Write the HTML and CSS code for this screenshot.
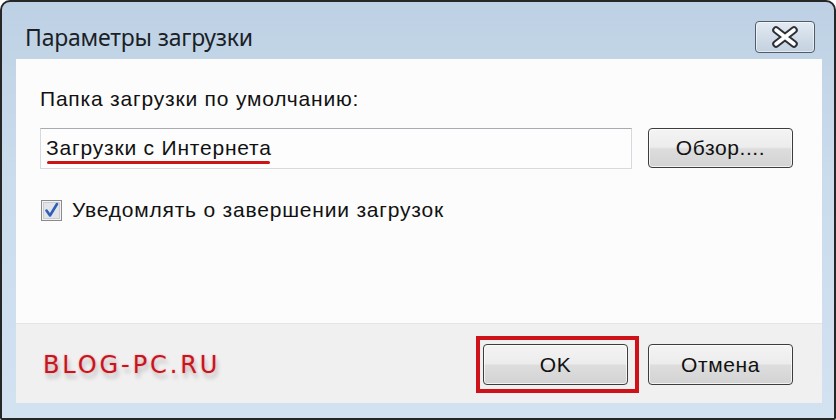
FILE: index.html
```html
<!DOCTYPE html>
<html lang="ru">
<head>
<meta charset="utf-8">
<title>Параметры загрузки</title>
<link rel="stylesheet" href="styles.css">
</head>
<body>
<div class="window">
  <div class="titlebar">
    <div class="title">Параметры загрузки</div>
    <button class="close" aria-label="Закрыть">
      <svg width="28" height="22" viewBox="0 0 28 22">
        <path d="M5 4 L23 18 M23 4 L5 18" stroke="#2b2f36" stroke-width="7.5" stroke-linecap="round" fill="none"/>
        <path d="M5 4 L23 18 M23 4 L5 18" stroke="#ffffff" stroke-width="3.6" stroke-linecap="round" fill="none"/>
      </svg>
    </button>
  </div>
  <div class="client">
    <div class="content">
      <div class="label">Папка загрузки по умолчанию:</div>
      <div class="folder-row">
        <div class="field"><span class="marked">Загрузки с Интернета</span></div>
        <button class="btn">Обзор....</button>
      </div>
      <label class="check-row">
        <span class="checkbox">
          <svg width="21" height="21" viewBox="0 0 21 21">
            <rect x="0.5" y="0.5" width="20" height="20" fill="#f4f4f4" stroke="#8a8a8a"/>
            <rect x="2.5" y="2.5" width="16" height="16" fill="#e2e4e8" stroke="#c9ccd2"/>
            <path d="M5.5 10.5 L9 15.5 L16 4" stroke="#2f5fb8" stroke-width="2.6" fill="none" stroke-linejoin="round" stroke-linecap="round"/>
          </svg>
        </span>
        <span class="check-text">Уведомлять о завершении загрузок</span>
      </label>
    </div>
    <div class="footer">
      <div class="brand">BLOG-PC.RU</div>
      <div class="actions">
        <button class="btn ok">OK</button>
        <button class="btn">Отмена</button>
      </div>
    </div>
  </div>
</div>
</body>
</html>
```
FILE: styles.css
```css
html, body {
  margin: 0;
  padding: 0;
  background: #ffffff;
}
.window {
  box-sizing: border-box;
  width: 836px;
  height: 420px;
  border: 2px solid #262626;
  border-radius: 10px 10px 2px 2px;
  background: linear-gradient(180deg, #bed1e4 0%, #cadbec 40%, #d2e2f1 100%);
  padding: 0 12px 15px 14px;
  display: flex;
  flex-direction: column;
  font-family: "Liberation Sans", Arial, sans-serif;
}
.titlebar {
  height: 57px;
  flex: none;
  display: flex;
  justify-content: space-between;
  align-items: flex-start;
  padding: 0 7px 0 9px;
}
.title {
  font-family: "Noto Sans", "Open Sans", sans-serif;
  font-size: 23px;
  line-height: 26px;
  margin-top: 22px;
  color: #1b1f26;
  letter-spacing: -0.2px;
}
.close {
  margin-top: 19px;
  width: 60px;
  height: 32px;
  padding: 0;
  border: 1px solid #525b66;
  border-radius: 4px;
  background: linear-gradient(180deg, #e3ebf3 0%, #d2dde8 50%, #c3d1df 100%);
  box-shadow: inset 0 0 0 1px rgba(255,255,255,0.55);
  display: flex;
  align-items: center;
  justify-content: center;
}
.client {
  flex: 1;
  display: flex;
  flex-direction: column;
  background: #fcfcfc;
}
.content {
  flex: 1;
  padding: 28px 0 0 24px;
  color: #111;
  font-size: 21px;
  letter-spacing: 0.8px;
}
.label {
  line-height: 24px;
}
.folder-row {
  display: flex;
  align-items: flex-start;
  margin-top: 17px;
}
.field {
  box-sizing: border-box;
  width: 592px;
  height: 41px;
  border: 1px solid #d6d9dd;
  border-top-color: #a9abb0;
  background: #fdfdfd;
  padding: 7px 0 0 5px;
  line-height: 24px;
}
.marked {
  position: relative;
  display: inline-block;
}
.marked::after {
  content: "";
  position: absolute;
  left: 1px;
  right: 2px;
  bottom: -4px;
  height: 3px;
  border-radius: 2px;
  background: #cc1417;
}
.btn {
  box-sizing: border-box;
  width: 145px;
  height: 41px;
  padding: 0;
  border: 1px solid #3d3d3d;
  border-radius: 4px;
  background: linear-gradient(180deg, #f4f4f4 0%, #ececec 48%, #dddddd 52%, #d3d3d3 100%);
  box-shadow: inset 0 0 0 1px rgba(255,255,255,0.7);
  font-family: "Liberation Sans", Arial, sans-serif;
  font-size: 21px;
  letter-spacing: 0.6px;
  color: #111;
}
.folder-row .btn {
  margin-left: 16px;
  height: 40px;
}
.check-row {
  display: flex;
  align-items: center;
  margin-top: 29px;
  margin-left: 1px;
}
.checkbox {
  display: flex;
  width: 21px;
  height: 21px;
}
.check-text {
  margin-left: 10px;
  line-height: 24px;
}
.footer {
  height: 80px;
  flex: none;
  box-sizing: border-box;
  background: #f0f0f0;
  border-top: 1px solid #e4e4e4;
  display: flex;
  align-items: center;
  justify-content: space-between;
  padding: 0 29px 0 27px;
}
.brand {
  font-family: "DejaVu Sans", sans-serif;
  font-size: 24px;
  letter-spacing: 2.9px;
  color: #c4161f;
  text-shadow: 0 0 2px #ff9aa0, 2px 5px 4px rgba(0,0,0,0.22);
  margin-top: 2px;
}
.actions {
  display: flex;
  gap: 20px;
  margin-top: 2px;
}
.ok {
  position: relative;
}
.ok::after {
  content: "";
  position: absolute;
  left: -8px;
  top: -9px;
  right: -12px;
  bottom: -9px;
  border: 4px solid #cf1119;
}
```
